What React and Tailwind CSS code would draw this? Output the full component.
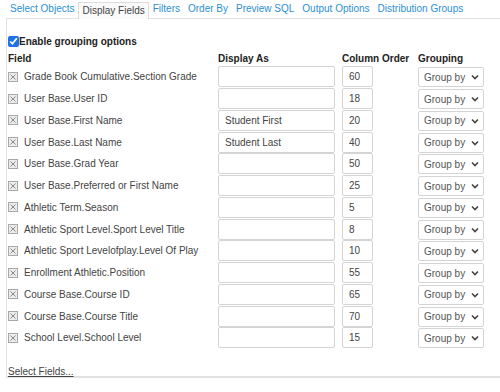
import React from 'react';

const rows = [
  { field: 'Grade Book Cumulative.Section Grade', as: '', order: '60' },
  { field: 'User Base.User ID', as: '', order: '18' },
  { field: 'User Base.First Name', as: 'Student First', order: '20' },
  { field: 'User Base.Last Name', as: 'Student Last', order: '40' },
  { field: 'User Base.Grad Year', as: '', order: '50' },
  { field: 'User Base.Preferred or First Name', as: '', order: '25' },
  { field: 'Athletic Term.Season', as: '', order: '5' },
  { field: 'Athletic Sport Level.Sport Level Title', as: '', order: '8' },
  { field: 'Athletic Sport Levelofplay.Level Of Play', as: '', order: '10' },
  { field: 'Enrollment Athletic.Position', as: '', order: '55' },
  { field: 'Course Base.Course ID', as: '', order: '65' },
  { field: 'Course Base.Course Title', as: '', order: '70' },
  { field: 'School Level.School Level', as: '', order: '15' },
];

const tabs = ['Select Objects', 'Display Fields', 'Filters', 'Order By', 'Preview SQL', 'Output Options', 'Distribution Groups'];

function RemoveBox() {
  return (
    <span className="flex h-[10px] w-[10px] shrink-0 items-center justify-center border border-[#a8a8a8] bg-[#ececec]">
      <svg width="6" height="6" viewBox="0 0 6 6">
        <path d="M0.5 0.5L5.5 5.5M5.5 0.5L0.5 5.5" stroke="#8a8a8a" strokeWidth="1" />
      </svg>
    </span>
  );
}

export default function App() {
  return (
    <div className="h-[392px] w-[500px] overflow-hidden whitespace-nowrap bg-white text-[10px] text-[#333]" style={{ fontFamily: '"Liberation Sans", Arial, sans-serif' }}>
      {/* Tabs */}
      <div className="flex h-[18px] items-end pl-[6px]">
        {tabs.map((t) => (
          <div
            key={t}
            className={
              t === 'Display Fields'
                ? 'relative top-[1px] h-[17px] border border-b-0 border-[#dcdcdc] bg-[#fafafa] px-[3px] leading-[16px] text-[#444]'
                : 'h-[17px] px-[4px] leading-[16px] text-[#2b8fd6]'
            }
          >
            {t}
          </div>
        ))}
      </div>

      {/* Panel */}
      <div className="ml-[6px] h-[360px] border-t border-l border-b-2 border-[#e2e2e2] pl-[1px]">
        <label className="mt-[16px] flex items-center font-bold text-[#222]">
          <input type="checkbox" defaultChecked className="m-0 h-[11px] w-[11px] accent-[#1a73e8]" />
          <span className="leading-[13px]">Enable grouping options</span>
        </label>

        <div className="mt-[5px] grid grid-cols-[210px_124px_76px_80px] font-bold leading-[12px] text-[#222]">
          <div>Field</div>
          <div>Display As</div>
          <div>Column Order</div>
          <div>Grouping</div>
        </div>

        <div className="mt-[1px]">
          {rows.map((r) => (
            <div key={r.field} className="grid h-[21.75px] grid-cols-[210px_124px_76px_80px] items-center">
              <div className="flex items-center gap-[6px] text-[#444]">
                <RemoveBox />
                <span>{r.field}</span>
              </div>
              <div>
                <input
                  type="text"
                  defaultValue={r.as}
                  className="h-[21px] w-[117px] rounded-[2px] border border-[#d4d4d4] px-[6px] text-[10px] text-[#444] outline-none"
                />
              </div>
              <div>
                <input
                  type="text"
                  defaultValue={r.order}
                  className="h-[21px] w-[31px] rounded-[2px] border border-[#d4d4d4] px-[6px] text-[10px] text-[#444] outline-none"
                />
              </div>
              <div className="pt-[1px]">
                <div className="flex h-[20px] w-[66px] items-center justify-between rounded-[2px] border border-[#d4d4d4] pl-[5px] pr-[4px] text-[#555]">
                  <span>Group by</span>
                  <svg width="8" height="6" viewBox="0 0 8 6">
                    <path d="M1 1.5L4 4.5L7 1.5" fill="none" stroke="#444" strokeWidth="1.6" />
                  </svg>
                </div>
              </div>
            </div>
          ))}
        </div>

        <div className="mt-[15px]">
          <a href="#" className="text-[#444] underline">Select Fields...</a>
        </div>
      </div>
    </div>
  );
}
